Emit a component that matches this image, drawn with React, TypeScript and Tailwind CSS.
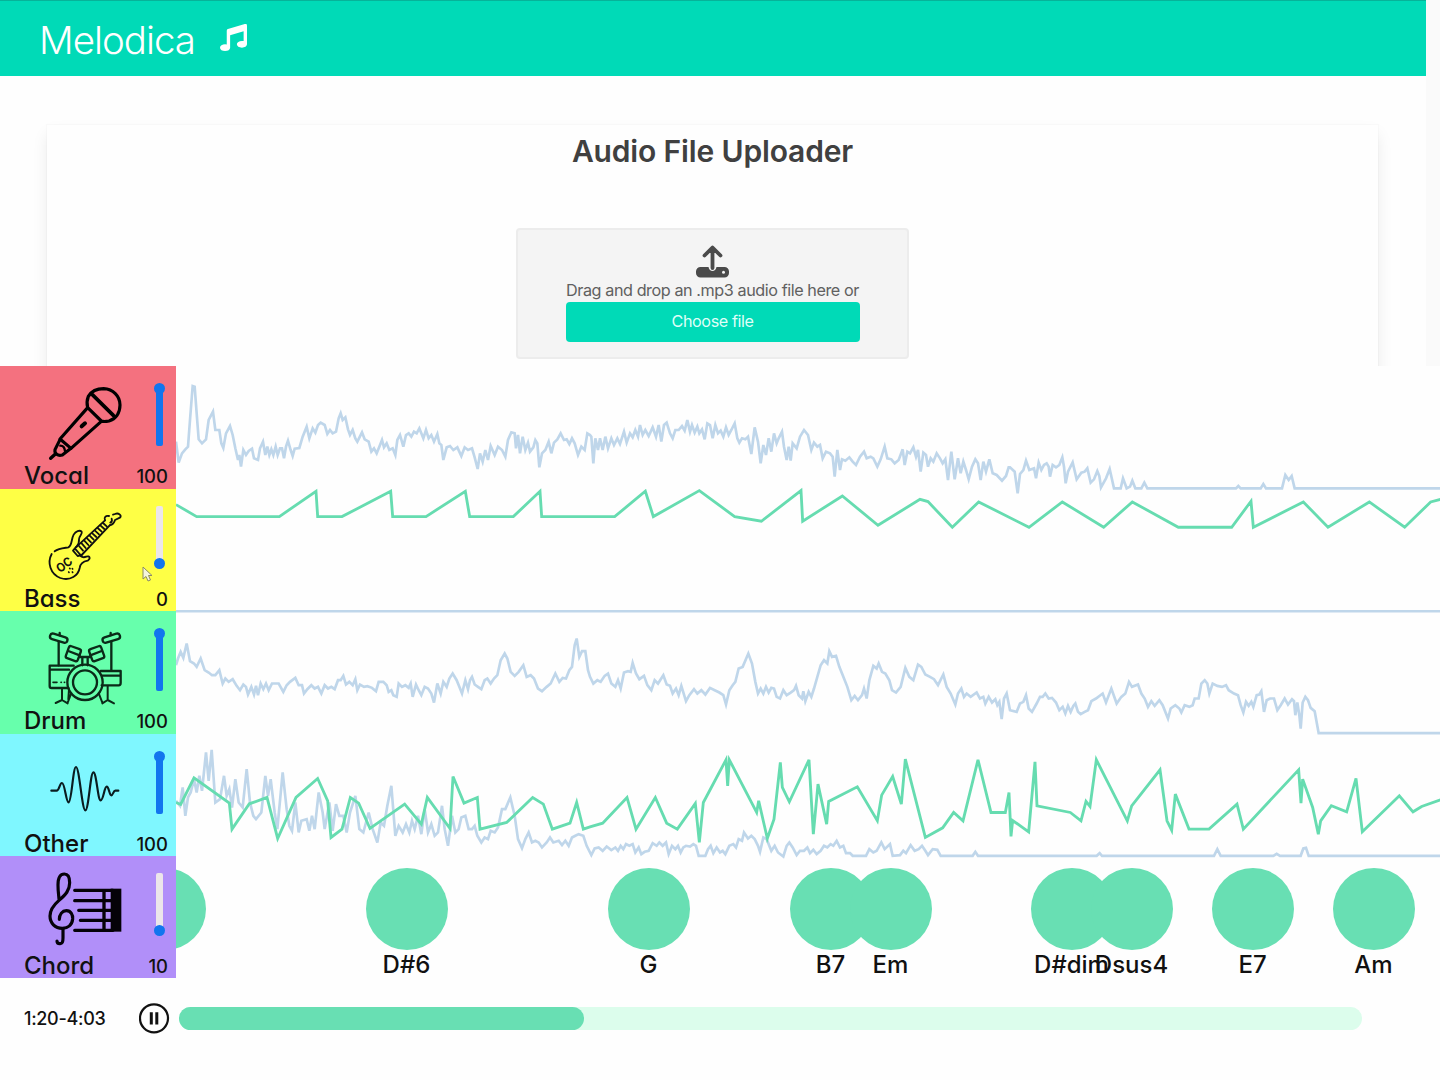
import React from "react";
import { FaMusic } from "react-icons/fa";

/* Lines are stored in three consecutive chunks of CHUNK units, on a grid of three units per pixel. */
const CHUNK = 1260;
function join(chunks: string[]) {
  return chunks
    .map((chunk, i) =>
      chunk
        .trim()
        .split(/\s+/)
        .map((p) => {
          const [x, y] = p.split(",").map(Number);
          return x + i * CHUNK + "," + y;
        })
        .join(" ")
    )
    .join(" ");
}

const vocalLevel = join([
  "18,215 26,278 36,250 46,238 54,230 60,150 68,48 74,50 80,130 86,208 96,220 108,208 116,150 129,125 136,180 148,180 154,220 160,234 168,190 180,168 188,195 196,235 204,270 208,255 213,290 220,240 228,255 236,243 246,236 252,265 264,270 270,235 279,215 286,255 292,230 298,255 304,238 310,255 317,230 323,255 330,235 336,235 342,265 348,230 354,212 362,240 368,258 374,236 388,234 398,200 410,170 418,205 428,175 436,188 444,165 452,158 464,165 472,192 480,180 488,190 498,185 506,145 512,130 518,150 526,142 534,178 540,195 548,180 556,205 562,215 576,187 584,208 596,215 604,245 612,235 620,250 628,230 636,210 642,232 650,220 658,240 668,235 676,255 682,210 690,195 700,230 708,195 716,190 724,200 732,185 740,190 748,175 760,205 768,180 776,205 784,195 792,215 802,192 808,220 814,225 820,270 830,232 840,228 850,240 862,232 874,258 884,232 894,240 906,235 914,262 923,297 930,250 938,275 946,240 954,270 962,228 974,255 984,230 996,240 1006,260 1014,210 1024,187 1034,190 1038,235 1044,195 1050,250 1058,200 1066,240 1074,218 1080,245 1090,232 1096,210 1102,220 1108,292 1116,250 1126,240 1136,215 1144,250 1152,218 1162,208 1172,190 1182,210 1190,208 1198,222 1206,205 1214,220 1224,255 1234,230 1244,240 1252,190",
  "0,195 4,200 10,280 16,205 24,240 30,205 38,240 46,200 54,235 64,205 72,225 82,205 90,222 102,185 110,218 120,190 128,202 136,180 144,200 150,165 158,195 166,180 176,198 188,172 198,200 206,165 214,215 222,165 230,158 240,190 248,205 256,180 266,180 276,168 284,182 292,150 300,185 306,165 314,188 322,170 328,190 336,178 344,208 352,160 360,165 368,205 376,165 384,190 392,182 400,200 408,172 416,195 424,180 434,160 442,205 448,218 456,205 466,208 474,200 484,252 494,172 504,215 512,280 520,225 528,255 536,205 544,245 552,190 560,220 566,205 576,185 582,230 590,270 596,230 602,272 608,220 620,235 630,200 642,180 654,195 664,240 672,218 682,230 690,225 698,265 708,245 720,250 728,260 734,320 742,240 750,300 756,268 766,272 778,262 788,275 798,285 810,260 822,245 830,265 842,260 850,265 862,290 872,268 884,230 892,265 904,268 914,280 926,270 938,238 944,285 952,245 960,250 970,232 978,260 984,240 992,305 1000,248 1008,255 1014,290 1022,265 1030,275 1040,250 1050,265 1058,280 1066,268 1074,330 1084,245 1094,328 1104,265 1112,310 1120,275 1128,300 1136,328 1146,290 1156,268 1164,280 1172,330 1180,275 1188,305 1198,268 1208,310 1220,315 1236,332 1248,318 1256,292",
  "0,292 14,305 23,370 30,312 40,300 48,272 58,300 72,295 78,325 86,278 94,300 102,285 110,280 116,290 120,320 128,285 138,292 148,285 157,262 162,290 167,340 174,305 188,277 200,328 214,308 224,305 232,295 242,338 252,328 262,303 268,318 273,352 288,325 299,297 312,355 332,355 339,325 350,355 360,350 367,332 376,355 394,355 403,338 412,355 678,355 685,348 692,355 752,355 760,342 768,355 816,355 826,315 836,330 845,318 854,355 1290,355",
]);

const bassPitch = join([
  "18,402 80,438 328,438 438,362 443,438 516,438 662,362 668,438 768,438 886,362 899,438 1030,438 1110,362 1115,438",
  "74,438 166,362 190,438 328,360 434,438 514,452 633,360 638,452 757,376 864,464 990,386 1014,393 1087,470 1166,394",
  "57,470 157,394 281,470 367,394 505,470 665,470 723,392 730,470 880,394 954,470 1078,394 1184,470 1262,394 1292,386",
]);

const drumLevel = join([
  "18,150 24,130 32,110 40,128 50,85 60,138 72,145 80,155 92,130 104,165 116,172 126,180 136,180 148,165 158,205 166,190 176,200 188,192 200,212 210,225 220,208 228,215 234,238 244,215 252,238 258,212 264,240 272,205 280,222 288,205 296,225 306,205 314,205 326,205 340,230 350,210 360,200 376,188 386,210 396,210 402,235 412,222 424,210 434,220 444,215 454,235 464,210 474,220 484,215 494,222 504,195 512,195 520,182 528,208 538,200 548,210 556,192 562,225 570,208 582,215 592,213 606,218 618,228 626,200 640,200 650,210 656,230 664,225 670,240 680,245 686,205 696,215 706,210 716,218 722,205 728,245 738,208 746,225 754,240 764,215 774,220 784,235 792,262 802,205 812,235 820,200 830,215 838,190 848,175 860,195 868,215 876,235 886,195 894,222 900,195 906,185 914,208 924,215 934,222 944,195 952,190 962,205 972,190 982,180 992,135 1004,115 1012,130 1022,170 1034,182 1046,170 1060,150 1070,185 1082,180 1092,190 1104,220 1116,228 1130,215 1142,205 1156,175 1168,200 1178,188 1188,190 1198,165 1206,155 1214,90 1220,70 1228,125 1236,108 1246,108 1254,165",
  "0,185 10,205 22,195 32,200 44,182 54,175 64,205 76,215 84,195 92,220 102,172 114,168 122,170 128,143 138,175 148,192 162,182 172,210 184,225 194,195 204,205 220,180 230,208 240,212 248,235 258,220 266,240 274,212 288,258 298,240 312,222 322,235 334,225 346,238 360,218 374,225 388,232 400,240 408,268 418,225 428,210 436,200 446,160 458,155 475,115 486,145 496,200 504,235 512,220 520,235 528,215 536,232 544,218 552,220 560,245 570,250 580,225 590,240 602,232 612,225 618,212 626,240 636,250 640,228 646,258 656,230 664,245 672,220 682,185 692,150 702,135 712,145 718,108 726,125 738,122 748,155 760,185 772,215 784,255 794,242 804,255 816,240 822,220 830,250 838,195 850,152 860,160 866,145 876,170 886,175 898,195 906,225 918,232 932,215 946,158 958,185 970,195 984,148 994,155 1006,178 1020,185 1032,192 1044,210 1060,178 1070,215 1082,235 1096,268 1104,235 1114,220 1122,245 1130,235 1142,245 1160,232 1170,250 1180,245 1186,265 1196,245 1206,262 1216,252 1222,270 1228,260 1235,312 1242,250 1250,235",
  "0,285 20,290 30,265 40,260 48,240 56,280 66,290 80,265 90,245 98,245 106,235 116,250 126,248 138,262 148,285 158,275 166,295 174,272 182,290 190,272 196,265 204,290 212,297 224,290 234,285 244,258 258,250 278,235 288,262 304,220 320,265 334,245 346,235 357,200 366,215 384,208 394,235 404,250 414,275 424,258 434,272 448,255 458,270 474,310 482,280 496,270 508,280 514,292 524,270 538,275 548,270 554,250 566,250 574,205 584,195 592,205 598,235 608,205 622,212 636,215 648,210 656,225 672,235 684,240 692,270 700,292 708,260 716,272 724,260 730,275 740,240 748,238 754,228 762,290 770,255 780,250 792,250 802,285 812,270 824,250 834,268 846,252 852,258 856,300 862,262 868,300 872,340 878,262 886,245 894,255 902,278 914,288 926,354 1290,354",
]);

const otherLevel = join([
  "18,555 30,570 38,515 46,600 54,545 62,530 72,490 80,530 88,480 96,525 108,410 116,495 125,402 136,560 150,550 162,480 170,540 178,520 186,575 196,490 206,560 218,575 230,460 240,560 250,600 258,610 274,590 286,480 294,540 302,490 314,590 322,640 338,470 350,580 358,630 366,645 376,560 386,650 394,615 410,610 418,645 426,600 434,640 446,530 458,590 464,640 478,560 488,645 498,565 508,600 520,600 530,650 540,590 556,540 568,640 580,650 596,590 608,640 622,680 632,620 642,630 652,570 664,510 676,660 686,630 698,650 708,625 718,650 726,615 734,640 744,600 754,655 764,580 774,650 784,625 794,660 804,650 816,570 824,640 834,690 846,600 856,650 866,640 874,605 886,600 896,640 906,640 914,630 922,660 934,680 944,665 954,670 962,645 974,650 984,635 996,580 1006,580 1021,545 1034,600 1044,670 1056,697 1066,670 1076,650 1086,680 1096,675 1106,680 1116,695 1130,680 1140,665 1150,680 1166,675 1176,688 1186,675 1196,690 1206,665 1216,660 1226,655 1240,660 1250,690",
  "4,718 14,698 26,695 38,705 50,692 64,703 76,695 84,705 92,690 100,700 108,685 118,690 128,685 136,710 146,695 154,715 164,708 176,705 188,682 200,690 208,680 218,690 228,680 236,715 246,690 256,700 264,690 272,710 280,695 288,690 300,692 310,685 318,690 326,720 346,720 354,700 362,690 370,712 380,695 390,710 398,705 406,715 418,690 430,685 438,695 446,670 456,675 462,650 474,668 484,660 494,670 504,690 510,708 520,665 530,670 544,705 554,690 564,710 580,722 590,690 598,680 608,695 620,718 630,705 642,705 652,695 660,712 670,702 680,715 692,705 702,690 712,695 722,685 730,690 740,675 750,695 760,690 768,712 780,712 788,720 828,720 838,700 850,710 860,705 874,680 884,700 900,685 908,720 930,718 940,705 948,712 962,688 974,705 986,700 996,690 1006,705 1014,718 1028,700 1042,702 1052,720 1148,720 1156,708 1164,720",
  "260,720 269,712 276,720 612,720 622,700 632,720 790,720 800,714 810,720 872,720 880,698 888,696 896,720 1290,720",
]);

const otherPitch = join([
  "18,560 32,566 72,486 178,562 186,640 238,564 291,545 323,668 378,545 443,488 473,555 483,665 516,640 541,545 566,562 600,638 704,565 754,625 772,545 840,638 849,482 882,562 922,545 930,640 1010,620 1088,545 1120,565 1147,640 1200,622 1220,560 1240,640",
  "0,633 38,622 111,545 138,640 196,545 230,622 262,640 316,563 328,680 340,560 408,432 413,510 418,432 500,590 506,555 532,668 552,610 571,440 577,515 598,558 657,432 670,655 684,505 710,625 716,557 802,513 862,615 875,538 908,482 934,565 946,430 1006,665 1058,636 1091,590 1119,615 1164,432 1203,590 1246,590 1257,530",
  "3,662 8,614 56,648 75,438 81,570 181,590 213,615 228,557 240,572 259,432 352,615 365,570 450,462 471,615 485,643 496,535 537,640 597,640 681,565 700,640 866,462 873,562 878,490 908,575 925,655 932,615 964,570 1010,588 1038,488 1057,648 1168,540 1209,588 1235,572 1292,552",
]);

const chords = [
  { x: 165, name: "" },
  { x: 406.5, name: "D#6" },
  { x: 648.5, name: "G" },
  { x: 830.5, name: "B7" },
  { x: 890.5, name: "Em" },
  { x: 1071.5, name: "D#dim" },
  { x: 1131.5, name: "Dsus4" },
  { x: 1252.5, name: "E7" },
  { x: 1373.5, name: "Am" },
];

const iconClass = "ml-[24px] mt-5 block h-[74px] w-[74px] shrink-0 overflow-visible";

function MicIcon() {
  return (
    <svg className={iconClass} viewBox="145 77 222 222" fill="none" stroke="#000" strokeWidth="9.500" strokeLinecap="round" strokeLinejoin="round">
      <path d="M266 108C276 92 294 85 312 85C340 86 361 107 361 134C361 158 348 176 328 182C318 184 310 184 305 182L264 142C261 130 262 118 266 108Z" />
      <path d="M278 103L341 165" strokeWidth="11" />
      <path d="M264 142L181 236L214 264L305 183" />
      <path d="M181 238L166 268C164 280 174 288 188 284L214 264" />
      <path d="M182 256C190 256 195 264 196 272" strokeWidth="7" />
      <path d="M168 280L153 294" strokeWidth="10" />
      <path d="M246 198L256 189" strokeWidth="12" />
    </svg>
  );
}

function GuitarIcon() {
  return (
    <svg className={iconClass} viewBox="145 445 222 222" fill="none" stroke="#111" strokeWidth="5.500" strokeLinecap="round" strokeLinejoin="round">
      <path d="M156 580C142 606 152 640 182 652C212 662 236 644 240 622C242 608 252 602 264 600C274 594 270 584 260 588C250 592 242 588 242 582" />
      <path d="M165 572C178 562 196 562 206 560C218 554 214 536 222 522C228 511 240 507 246 513C250 520 238 526 238 536C239 546 236 552 231 558" />
      <path d="M231 558L316 479M246 583L330 494" />
      <path d="M220 570L230 558M220 570L234 586L246 583M228 566L240 580M238 556L250 570M246 548L258 562M254 540L266 553M262 533L274 545M270 525L282 537M278 518L290 529M286 510L298 521M294 502L306 513M302 494L314 505M310 487L322 498" />
      <path d="M316 479C312 470 318 464 328 466M340 462L346 460M330 494C338 492 344 486 346 478L362 470C366 462 356 456 346 460M336 474C338 480 336 484 332 486" />
      <path d="M207 634L208 635M218 624L219 625M210 623L211 624M218 634L219 635" strokeWidth="5" />
      <text x="182" y="638" transform="rotate(-38 182 638)" fontFamily="Inter, sans-serif" fontWeight="700" fontSize="37" textLength="50" lengthAdjust="spacingAndGlyphs" fill="#111" stroke="none">OC</text>
    </svg>
  );
}

function DrumIcon() {
  return (
    <svg className={iconClass} viewBox="145 77 222 222" fill="none" stroke="#0b2a18" strokeWidth="7" strokeLinecap="round" strokeLinejoin="round">
      <rect x="150" y="90" width="54" height="17" rx="8.5" transform="rotate(17 177 99)" />
      <rect x="308" y="90" width="54" height="17" rx="8.5" transform="rotate(-17 335 99)" />
      <path d="M180 83V90M333 83V90M177 110V180M335 110V194" />
      <rect x="202" y="126" width="38" height="38" rx="6" transform="rotate(20 221 145)" />
      <rect x="272" y="126" width="38" height="38" rx="6" transform="rotate(-20 291 145)" />
      <path d="M206 137L240 150M306 137L272 150M240 155H272M248 156V180M264 156V180" />
      <path d="M206 248H156C152 248 150 246 150 242V181H222M150 193H208M306 240H357C361 240 363 236 363 232V197H303M363 211H308" />
      <path d="M160 231H172M184 231H185M194 231H195" strokeWidth="5" />
      <circle cx="256" cy="231" r="53" />
      <circle cx="256" cy="231" r="36" />
      <path d="M187 250V284L168 293M187 284L204 294M324 242V284L308 294M324 284L343 294M214 266L204 292M298 266L308 292M208 252L206 282" strokeWidth="6" />
    </svg>
  );
}

function WaveIcon() {
  return (
    <svg className={iconClass} viewBox="145 445 222 222" fill="none" stroke="#0a1c20" strokeWidth="6.500" strokeLinecap="round" strokeLinejoin="round">
      <path d="M155 555H171C179 555 180 531 187 532C196 533 199 591 207 590C216 588 220 484 229 484C239 484 247 614 257 614C267 614 272 500 281 500C291 500 294 584 303 584C311 584 314 543 321 543C328 543 329 569 335 569C340 569 341 555 347 555H356" />
    </svg>
  );
}

function ClefIcon() {
  return (
    <svg className={iconClass} viewBox="145 77 222 222" fill="none" stroke="#050208" strokeWidth="9.500" strokeLinecap="round" strokeLinejoin="round">
      <path d="M179 207C179 192 188 181 200 181C214 181 220 194 219 206C217 224 205 234 188 234C166 234 151 218 151 197C151 178 163 163 178 150C198 133 210 120 210 97C210 80 204 71 194 71C181 71 175 84 175 104C175 122 177 134 178 146" />
      <path d="M190 236V262C190 275 188 281 180 280C175 280 172 277 172 272" />
      <path d="M225 120H340M225 151H340M237 180H340M242 210H340M225 240H340" strokeWidth="9.500" />
      <path d="M313 118V242" strokeWidth="10" strokeLinecap="butt" />
      <path d="M333 115H365V244H333Z" fill="#050208" stroke="none" />
    </svg>
  );
}

function UploadIcon() {
  return (
    <svg className="block h-[33px] w-[33px]" viewBox="0 0 33 33">
      <path d="M4.500 22H12.500C13 24.800 14.600 26 16.500 26S20 24.800 20.500 22H28.500A4.500 4.500 0 0 1 33 26.500V28A4.500 4.500 0 0 1 28.500 32.500H4.500A4.500 4.500 0 0 1 0 28V26.500A4.500 4.500 0 0 1 4.500 22Z" fill="#4a4a4a" />
      <circle cx="27.500" cy="27.300" r="1.500" fill="#f4f4f4" />
      <path d="M16.500 23V3M8.500 10.500L16.500 2.500L24.500 10.500" fill="none" stroke="#4a4a4a" strokeWidth="3.800" strokeLinecap="round" strokeLinejoin="round" />
    </svg>
  );
}

function Slider({ full }: { full: boolean }) {
  return (
    <div className={full ? "relative mr-[5.500px] mt-[18px] h-[62px] w-[7px] rounded-[2px] bg-[#1275ee]" : "relative mr-[5.500px] mt-[17.500px] h-[60px] w-[7px] rounded-[2px] bg-[#ece6ea]"}>
      <div className={full ? "absolute -left-[2px] -top-px size-[11px] rounded-full bg-[#1275ee]" : "absolute -bottom-[3px] -left-[2px] size-[11px] rounded-full bg-[#1275ee]"} />
    </div>
  );
}

interface TrackProps {
  name: string;
  value: string;
  color: string;
  icon: React.ReactNode;
  full: boolean;
  children: React.ReactNode;
}

function Track({ name, value, color, icon, full, children }: TrackProps) {
  return (
    <div className="flex min-h-0">
      <div className={"relative z-10 flex w-[176px] shrink-0 justify-between pl-6 pr-2 " + color}>
        <div className="flex flex-col">
          {icon}
          <span className="mt-px text-[24px] font-[450] leading-[30px]">{name}</span>
        </div>
        <div className="flex flex-col items-end">
          <Slider full={full} />
          <span className={full ? "mt-[18px] text-[18.500px] font-[450] leading-6" : "mt-[20.500px] text-[18.500px] font-[450] leading-6"}>{value}</span>
        </div>
      </div>
      <div className="relative min-w-0 flex-1">{children}</div>
    </div>
  );
}

function Lane({ top, level, pitch }: { top: number; level: string; pitch?: string }) {
  return (
    <svg className="block h-full w-full overflow-visible" viewBox={"18 " + top + " 3792 367.200"} preserveAspectRatio="none" fill="none" strokeWidth="8">
      <polyline points={level} stroke="#bfd6ea" strokeLinejoin="miter" />
      {pitch && <polyline points={pitch} stroke="#66dcb0" strokeWidth="8.500" />}
    </svg>
  );
}

export default function App() {
  return (
    <div className="flex h-[1080px] w-[1440px] flex-col overflow-hidden bg-white font-['Inter',sans-serif] text-[#111]">
      <section className="flex h-[366.400px] shrink-0 overflow-hidden">
        <div className="flex w-[1426px] flex-col bg-[#fefefe]">
          <header className="flex h-[75.500px] shrink-0 items-center gap-[25px] border-t border-[#06b399] bg-[#00dab7] pl-[39px] pt-[3px] text-white">
            <h1 className="w-[156px] whitespace-nowrap text-[38.500px] font-[350] leading-none tracking-[-1px]">Melodica</h1>
            <FaMusic size={27} className="-mt-[4px]" />
          </header>
          <div className="ml-[47px] mt-[49px] flex h-[300px] w-[1331px] shrink-0 flex-col items-center bg-[#fefefe] shadow-[0_8px_16px_-2px_rgba(10,10,10,0.1),0_0_0_1px_rgba(10,10,10,0.015)]">
            <h2 className="mt-[7px] text-[30px] font-semibold leading-[38px] tracking-[-0.150px] text-[#404040]">Audio File Uploader</h2>
            <div className="mt-[58px] flex h-[131px] w-[393px] flex-col items-center rounded-[4px] border-2 border-[#ececec] bg-[#f4f4f4] pt-[15px]">
              <UploadIcon />
              <p className="whitespace-nowrap text-[16.200px] leading-[24px] tracking-[-0.430px] text-[#606060]">Drag and drop an .mp3 audio file here or</p>
              <button className="h-[40px] w-[294px] rounded-[4px] bg-[#00dab7] text-[16.200px] tracking-[-0.430px] text-[#dffff8]">Choose file</button>
            </div>
          </div>
        </div>
        <div className="flex-1 bg-[#fafafa]" />
      </section>

      <main className="grid h-[612px] shrink-0 grid-rows-5 bg-[#fefefe] [font-feature-settings:'cv11']">
        <Track name="Vocal" value="100" color="bg-[#f4717f]" icon={<MicIcon />} full>
          <Lane top={-12} level={vocalLevel} />
        </Track>
        <Track
          name="Bass"
          value="0"
          color="bg-[#feff45]"
          full={false}
          icon={
            <>
              <GuitarIcon />
              <svg className="absolute left-[142px] top-[77px] h-[16px] w-[11px]" viewBox="0 0 11 16">
                <path d="M1 1V13L4 10.500L6 15L8.500 14L6.500 9.500H10Z" fill="#f5f5dc" stroke="#8c8c60" strokeWidth="1" />
              </svg>
            </>
          }
        >
          <Lane top={355.2} level="18,722 3812,722" pitch={bassPitch} />
        </Track>
        <Track name="Drum" value="100" color="bg-[#67ffac]" icon={<DrumIcon />} full>
          <Lane top={-12.6} level={drumLevel} />
        </Track>
        <Track name="Other" value="100" color="bg-[#7ff7ff]" icon={<WaveIcon />} full>
          <Lane top={354.6} level={otherLevel} pitch={otherPitch} />
        </Track>
        <Track name="Chord" value="10" color="bg-[#b18ff9]" icon={<ClefIcon />} full={false}>
          {chords.map((c) => (
            <div key={c.x} className="absolute top-[12px] flex w-[120px] -translate-x-1/2 flex-col items-center" style={{ left: c.x - 176 }}>
              <div className="size-[82px] rounded-full bg-[#68dfb3]" />
              <span className="whitespace-nowrap text-[24px] font-[450] leading-[30px]">{c.name}</span>
            </div>
          ))}
        </Track>
      </main>

      <footer className="flex flex-1 items-start bg-[#fefefe] pl-6 pt-[25px]">
        <span className="mt-[4px] w-[115px] whitespace-nowrap text-[18px] font-[450] leading-6 tracking-[-0.300px] [font-feature-settings:'cv11']">1:20-4:03</span>
        <svg className="block h-8 w-8" viewBox="0 0 32 32" fill="none" stroke="#111">
          <circle cx="15" cy="15.300" r="14" strokeWidth="2.200" />
          <path d="M12.300 9.200V21.400M17.800 9.200V21.400" strokeWidth="3" />
        </svg>
        <div className="ml-[8px] mt-[4px] h-[23px] w-[1183px] rounded-full bg-[#dcfdec]">
          <div className="h-full w-[405px] rounded-full bg-[#68dfb3]" />
        </div>
      </footer>
    </div>
  );
}
